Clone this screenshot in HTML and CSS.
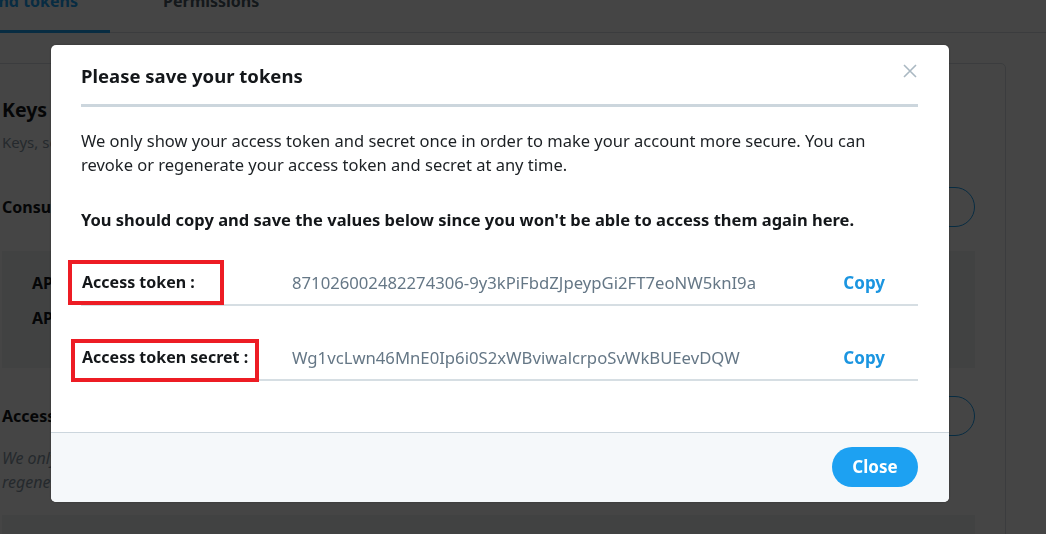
FILE: index.html
```html
<!DOCTYPE html>
<html lang="en">
<head>
<meta charset="utf-8">
<title>Please save your tokens</title>
<link rel="stylesheet" href="styles.css">
</head>
<body>
<div class="page">
  <nav class="tabs">
    <div class="tab tab-active">Keys and tokens</div>
    <div class="tab">Permissions</div>
  </nav>
  <section class="card">
    <h2 class="card-title">Keys and tokens</h2>
    <p class="card-sub">Keys, secret keys and access tokens management.</p>
    <div class="card-row">
      <h3 class="card-h3">Consumer API keys</h3>
      <span class="outline-btn">Regenerate</span>
    </div>
    <div class="grey-box">
      <div class="kv">API key:</div>
      <div class="kv">API secret key:</div>
    </div>
    <div class="card-row card-row-2">
      <h3 class="card-h3">Access token &amp; access token secret</h3>
      <span class="outline-btn">Regenerate</span>
    </div>
    <p class="card-italic">We only show your access token and secret once in order to make your account more secure. You can<br>regenerate your access token and secret at any time.</p>
    <div class="grey-box grey-box-2"></div>
  </section>
</div>
<div class="overlay"></div>

<div class="modal">
  <div class="modal-header">
    <h1 class="modal-title">Please save your tokens</h1>
    <span class="modal-close" aria-label="Close">
      <svg width="14" height="14" viewBox="0 0 14 14"><path d="M1 1L13 13M13 1L1 13" stroke="#aab8c2" stroke-width="1.6" fill="none"/></svg>
    </span>
  </div>
  <div class="modal-body">
    <p class="intro">We only show your access token and secret once in order to make your account more secure. You can<br>revoke or regenerate your access token and secret at any time.</p>
    <p class="warn">You should copy and save the values below since you won't be able to access them again here.</p>
    <div class="token-row">
      <span class="mark mark-1"></span>
      <span class="token-label">Access token :</span>
      <span class="token-value">871026002482274306-9y3kPiFbdZJpeypGi2FT7eoNW5knI9a</span>
      <span class="token-copy">Copy</span>
    </div>
    <div class="token-row token-row-2">
      <span class="mark mark-2"></span>
      <span class="token-label">Access token secret :</span>
      <span class="token-value">Wg1vcLwn46MnE0Ip6i0S2xWBviwalcrpoSvWkBUEevDQW</span>
      <span class="token-copy">Copy</span>
    </div>
  </div>
  <div class="modal-footer">
    <span class="close-btn">Close</span>
  </div>
</div>
</body>
</html>
```
FILE: styles.css
```css
* { box-sizing: border-box; }
html, body {
  margin: 0;
  padding: 0;
  width: 1046px;
  height: 534px;
  overflow: hidden;
  background: #fff;
  font-family: "Noto Sans", "Open Sans", sans-serif;
  color: #14171a;
}
h1, h2, h3, p { margin: 0; }

/* ---------- background page ---------- */
.page {
  margin-left: -29px;
  width: 1100px;
}
.tabs {
  display: flex;
  align-items: flex-start;
  height: 51px;
  margin-top: -18px;
  border-bottom: 1px solid #d8dfe4;
}
.tab {
  font-size: 16px;
  font-weight: 700;
  color: #4a5a66;
  padding-top: 8px;
  height: 51px;
}
.tab-active {
  margin-left: -60px;
  width: 199px;
  color: #1da1f2;
  border-bottom: 3px solid #1da1f2;
  text-align: right;
  padding-right: 32px;
}
.tab + .tab { margin-left: 53px; }

.card {
  margin-top: 30px;
  width: 1035px;
  height: 520px;
  border: 1px solid #d8dfe4;
  border-radius: 5px;
  padding: 30px 30px 0 30px;
}
.card-title {
  font-size: 19.5px;
  font-weight: 700;
  line-height: 26px;
  margin-top: 3px;
}
.card-sub {
  font-size: 15px;
  color: #8899a6;
  margin-top: 9px;
  line-height: 20px;
}
.card-row {
  display: flex;
  justify-content: space-between;
  align-items: center;
  margin-top: 35px;
  height: 40px;
}
.card-h3 {
  font-size: 16px;
  font-weight: 700;
}
.outline-btn {
  display: inline-block;
  height: 40px;
  width: 150px;
  border: 1px solid #1da1f2;
  border-radius: 20px;
  color: #1da1f2;
  font-weight: 700;
  line-height: 38px;
  text-align: left;
  padding-left: 18px;
}
.grey-box {
  margin-top: 24px;
  height: 117px;
  background: #f0f3f5;
  padding: 20px 30px;
}
.kv {
  font-size: 16px;
  font-weight: 700;
  line-height: 24px;
  margin-bottom: 11px;
}
.card-row-2 { margin-top: 28px; }
.card-italic {
  font-style: italic;
  color: #8899a6;
  font-size: 16px;
  line-height: 24px;
  margin-top: 10px;
}
.grey-box-2 { margin-top: 21px; }

.overlay {
  position: fixed;
  inset: 0;
  background: rgba(0, 0, 0, 0.73);
}

/* ---------- modal ---------- */
.modal {
  position: absolute;
  left: 51px;
  top: 45px;
  width: 898px;
  height: 457px;
  background: #fff;
  border-radius: 5px;
  overflow: hidden;
  display: flex;
  flex-direction: column;
  box-shadow: 0 0 2px rgba(0,0,0,0.3);
}
.modal-header {
  margin: 0 31px 0 30px;
  padding-top: 18px;
  padding-bottom: 15px;
  border-bottom: 3px solid #ccd6dd;
  display: flex;
  justify-content: space-between;
  align-items: flex-start;
}
.modal-title {
  font-size: 18.5px;
  font-weight: 700;
  line-height: 26px;
  color: #14171a;
}
.modal-close {
  display: block;
  margin-top: 1px;
  width: 14px;
  height: 14px;
  margin-right: 1px;
}
.modal-close svg { display: block; }
.modal-body {
  flex: 1;
  padding: 22px 31px 0 30px;
}
.intro {
  font-size: 16.5px;
  line-height: 24px;
  color: #1c2024;
}
.warn {
  margin-top: 31px;
  font-size: 16.5px;
  line-height: 24px;
  font-weight: 700;
  color: #14171a;
}
.token-row {
  position: relative;
  display: grid;
  grid-template-columns: 211px 1fr auto;
  align-items: center;
  margin-top: 30px;
  height: 44px;
  padding-bottom: 2px;
  border-bottom: 2px solid #d6dee3;
}
.token-row-2 { margin-top: 31px; }
.token-label {
  font-size: 16px;
  font-weight: 700;
  padding-left: 1px;
  color: #14171a;
}
.token-value {
  font-size: 16.7px;
  color: #657786;
  white-space: nowrap;
}
.token-copy {
  font-size: 17px;
  font-weight: 700;
  color: #1b95e0;
  padding-right: 33px;
}
.mark {
  position: absolute;
  border: 4px solid #ed1c24;
}
.mark-1 { left: -13px; top: -2px; width: 156px; height: 45px; }
.mark-2 { left: -10px; top: 2px; width: 188px; height: 43px; }

.modal-footer {
  height: 70px;
  border-top: 1px solid #ccd6dd;
  background: #f5f8fa;
  display: flex;
  justify-content: flex-end;
  align-items: flex-start;
  padding: 14px 31px 0 0;
}
.close-btn {
  display: block;
  width: 86px;
  height: 40px;
  border-radius: 20px;
  background: #1da1f2;
  color: #fff;
  font-weight: 700;
  font-size: 17px;
  line-height: 40px;
  text-align: center;
}
```
